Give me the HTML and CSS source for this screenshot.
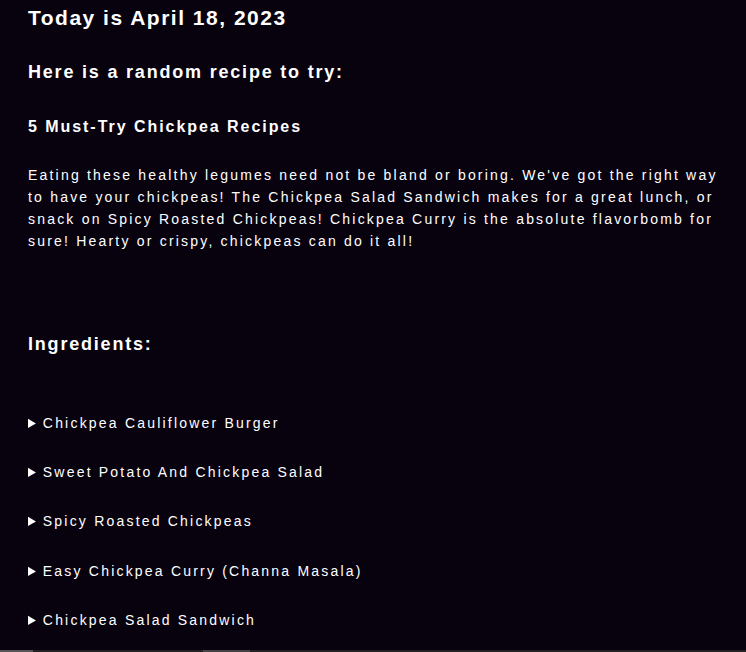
FILE: index.html
```html
<!DOCTYPE html>
<html>
<head>
<meta charset="utf-8">
<link rel="stylesheet" href="styles.css">
</head>
<body>
<main class="page">
  <h1 class="date">Today is April 18, 2023</h1>
  <h2 class="intro">Here is a random recipe to try:</h2>
  <h3 class="recipe-title">5 Must-Try Chickpea Recipes</h3>
  <p class="summary">Eating these healthy legumes need not be bland or boring. We've got the right way to have your chickpeas! The Chickpea Salad Sandwich makes for a great lunch, or snack on Spicy Roasted Chickpeas! Chickpea Curry is the absolute flavorbomb for sure! Hearty or crispy, chickpeas can do it all!</p>
  <h2 class="ingredients-title">Ingredients:</h2>
  <div class="ingredients">
    <details class="item"><summary>Chickpea Cauliflower Burger</summary></details>
    <details class="item"><summary>Sweet Potato And Chickpea Salad</summary></details>
    <details class="item"><summary>Spicy Roasted Chickpeas</summary></details>
    <details class="item"><summary>Easy Chickpea Curry (Channa Masala)</summary></details>
    <details class="item"><summary>Chickpea Salad Sandwich</summary></details>
  </div>
</main>
<div class="scrollbar">
  <span class="thumb thumb-a"></span>
  <span class="thumb thumb-b"></span>
</div>
</body>
</html>
```
FILE: styles.css
```css
html, body {
  background: #08020f;
}
body {
  margin: 0;
  color: #ffffff;
  font-family: "Liberation Sans", Arial, sans-serif;
}
.page {
  padding: 6px 28px 0 28px;
}
.date {
  font-size: 21px;
  letter-spacing: 1.5px;
  margin: 0;
  line-height: 24px;
}
.intro {
  font-size: 18px;
  letter-spacing: 1.8px;
  margin: 31px 0 0 0;
  line-height: 22px;
}
.recipe-title {
  font-size: 16px;
  letter-spacing: 1.95px;
  margin: 34px 0 0 0;
  line-height: 20px;
}
.summary {
  font-size: 14px;
  letter-spacing: 2.2px;
  line-height: 22px;
  margin: 27px 0 0 0;
  max-width: 690px;
}
.ingredients-title {
  font-size: 18px;
  letter-spacing: 1.8px;
  margin: 81px 0 0 0;
  line-height: 22px;
}
.ingredients {
  display: flex;
  flex-direction: column;
  gap: 31.2px;
  margin-top: 59px;
}
.item summary {
  font-size: 14px;
  letter-spacing: 2.2px;
  line-height: 18px;
  cursor: pointer;
}
.scrollbar {
  position: fixed;
  left: 0;
  right: 0;
  bottom: 0;
  height: 2px;
  background: #222222;
}
.thumb {
  position: absolute;
  top: 0;
  height: 2px;
}
.thumb-a {
  left: 0;
  width: 33px;
  background: #555555;
}
.thumb-b {
  left: 203px;
  width: 47px;
  background: #444444;
}
```
